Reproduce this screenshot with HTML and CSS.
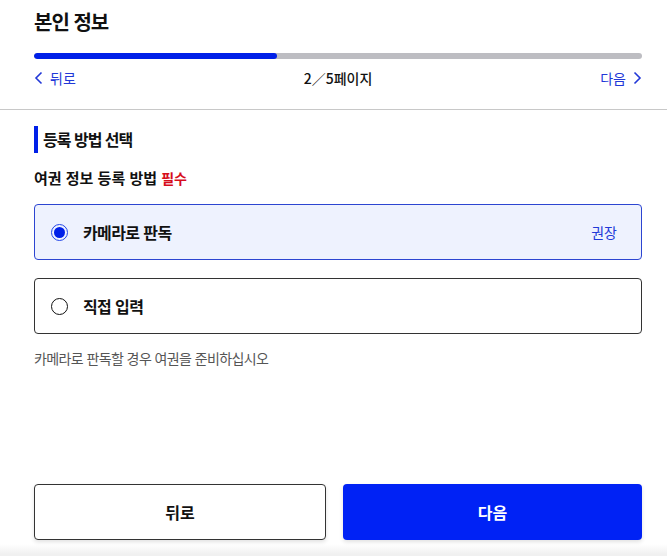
FILE: index.html
```html
<!DOCTYPE html>
<html lang="ko">
<head>
<meta charset="utf-8">
<link rel="stylesheet" href="styles.css">
</head>
<body>
<div class="page">
  <header class="header">
    <h1 class="title">본인 정보</h1>
    <div class="progress"><div class="progress-fill" style="width:40%"></div></div>
    <nav class="stepnav">
      <a class="navlink"><svg class="chev" width="9" height="14" viewBox="0 0 9 14"><path d="M7.5 1.5 L2 7 L7.5 12.5" fill="none" stroke="currentColor" stroke-width="1.6"/></svg>뒤로</a>
      <span class="pageinfo">2／5페이지</span>
      <a class="navlink">다음<svg class="chev" width="9" height="14" viewBox="0 0 9 14"><path d="M1.5 1.5 L7 7 L1.5 12.5" fill="none" stroke="currentColor" stroke-width="1.6"/></svg></a>
    </nav>
  </header>
  <main class="content">
    <h2 class="section-title">등록 방법 선택</h2>
    <div class="field-label">여권 정보 등록 방법 <span class="req">필수</span></div>
    <div class="options">
      <label class="option selected">
        <span class="radio on"></span>
        <span class="option-text">카메라로 판독</span>
        <span class="badge">권장</span>
      </label>
      <label class="option">
        <span class="radio"></span>
        <span class="option-text">직접 입력</span>
      </label>
    </div>
    <p class="hint">카메라로 판독할 경우 여권을 준비하십시오</p>
  </main>
  <footer class="footer">
    <button class="btn btn-back">뒤로</button>
    <button class="btn btn-next">다음</button>
  </footer>
</div>
</body>
</html>
```
FILE: styles.css
```css
* { box-sizing: border-box; }
html, body { margin: 0; padding: 0; }
body {
  font-family: "Noto Sans CJK KR", "Noto Sans", sans-serif;
  color: #111;
  background: #fff;
}
.page {
  width: 667px;
  height: 556px;
  display: flex;
  flex-direction: column;
  overflow: hidden;
}
.header {
  padding: 0 25px 0 34px;
  border-bottom: 1px solid #c8c8c8;
}
.title {
  margin: 0;
  padding-top: 7px;
  font-size: 20px;
  line-height: 30px;
  font-weight: 700;
  letter-spacing: -1px;
}
.progress {
  margin-top: 16px;
  height: 6px;
  border-radius: 3px;
  background: #bdbdc2;
  overflow: hidden;
}
.progress-fill {
  height: 100%;
  background: #0020e8;
  border-radius: 3px;
}
.stepnav {
  display: flex;
  justify-content: space-between;
  align-items: center;
  height: 20px;
  margin: 9px 0 21px;
}
.navlink {
  display: flex;
  align-items: center;
  gap: 7px;
  color: #2238d8;
  font-size: 14px;
}
.chev { display: block; }
.pageinfo {
  font-size: 14px;
  color: #111;
  font-weight: 500;
}
.content {
  flex: 1;
  padding: 16px 25px 0 34px;
}
.section-title {
  margin: 0;
  border-left: 4px solid #0020e8;
  padding-left: 5px;
  font-size: 16px;
  line-height: 27px;
  font-weight: 700;
  letter-spacing: -1px;
}
.field-label {
  margin-top: 12px;
  font-size: 15px;
  font-weight: 700;
  line-height: 26px;
}
.req {
  color: #d60d1c;
  font-size: 14px;
}
.options {
  margin-top: 13px;
  display: flex;
  flex-direction: column;
  gap: 18px;
}
.option {
  display: flex;
  align-items: center;
  height: 56px;
  border: 1px solid #333;
  border-radius: 4px;
  padding: 0 24px 0 16px;
  background: #fff;
}
.option.selected {
  border-color: #2c45d1;
  background: #eef2fe;
}
.radio {
  width: 17px;
  height: 17px;
  border: 1.5px solid #111;
  border-radius: 50%;
  flex: none;
  position: relative;
}
.radio.on {
  border-color: #2246e8;
}
.radio.on::after {
  content: "";
  position: absolute;
  left: 2px; top: 2px; right: 2px; bottom: 2px;
  border-radius: 50%;
  background: #0020e8;
}
.option-text {
  margin-left: 15px;
  font-size: 16px;
  font-weight: 700;
  letter-spacing: -0.6px;
  flex: 1;
}
.badge {
  color: #2238d8;
  font-size: 14px;
}
.hint {
  margin: 14px 0 0;
  font-size: 14px;
  color: #555;
  line-height: 20px;
  letter-spacing: -0.6px;
}
.footer {
  display: flex;
  gap: 17px;
  padding: 0 25px 16px 34px;
  background: linear-gradient(to bottom, #fff 0, #fff 60px, #f0f0f0 70px);
}
.btn {
  height: 56px;
  border-radius: 4px;
  font-family: inherit;
  font-size: 16px;
  font-weight: 700;
  box-shadow: 0 2px 4px rgba(0,0,0,0.12);
}
.btn-back {
  flex: 0 0 292px;
  background: #fff;
  color: #111;
  border: 1px solid #333;
}
.btn-next {
  flex: 1;
  background: #0022f5;
  color: #fff;
  border: none;
}
```
